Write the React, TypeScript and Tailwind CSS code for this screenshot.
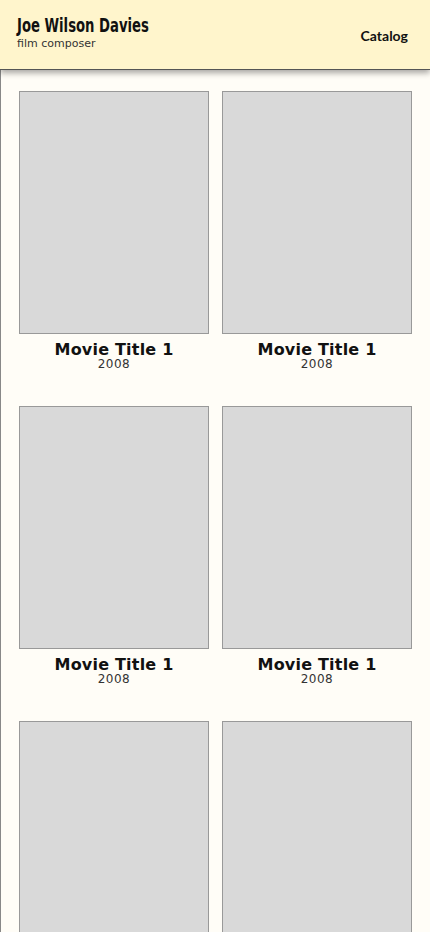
import React from 'react';

interface Movie {
  title: string;
  year: string;
}

const movies: Movie[] = Array.from({ length: 6 }, () => ({ title: 'Movie Title 1', year: '2008' }));

function MovieCard({ movie }: { movie: Movie }) {
  return (
    <div className="flex flex-col items-center">
      <div className="w-full h-[243px] bg-[#d9d9d9] border border-[#999999]"></div>
      <div className="mt-[7px] text-[16px] leading-[18px] font-bold text-[#111] font-['DejaVu_Sans',sans-serif] tracking-[0.2px]">
        {movie.title}
      </div>
      <div className="text-[12px] leading-[14px] mt-[-2px] text-[#333] font-['DejaVu_Sans',sans-serif] tracking-[0.5px]">{movie.year}</div>
    </div>
  );
}

export default function App() {
  return (
    <div className="w-[430px] h-[932px] overflow-hidden bg-[#fffdf7] flex flex-col">
      <header className="relative z-10 h-[70px] shrink-0 bg-[#fff5cc] border-b border-[#555] shadow-[0_3px_6px_rgba(0,0,0,0.35)] flex items-center justify-between pl-[17px] pr-[22px]">
        <div className="flex flex-col mt-[-4px]">
          <span className="inline-block origin-left scale-x-[0.66] whitespace-nowrap text-[20px] leading-[23px] font-bold text-[#111] font-['DejaVu_Sans',sans-serif]">
            Joe Wilson Davies
          </span>
          <span className="text-[11px] leading-[14px] text-[#333] font-['DejaVu_Sans',sans-serif]">film composer</span>
        </div>
        <nav className="text-[14px] font-bold text-[#111] font-['Lato',sans-serif] mt-[2px]">Catalog</nav>
      </header>
      <main className="flex-1 border-l border-[#888] px-[18px] pt-[21px]">
        <div className="grid grid-cols-2 gap-x-[13px] gap-y-[35px]">
          {movies.map((m, i) => (
            <MovieCard key={i} movie={m} />
          ))}
        </div>
      </main>
    </div>
  );
}
